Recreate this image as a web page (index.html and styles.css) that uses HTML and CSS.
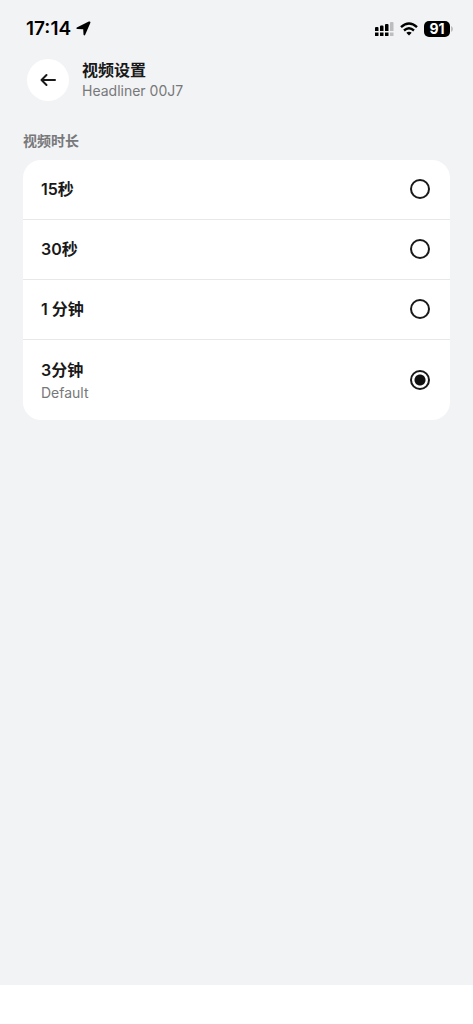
FILE: index.html
```html
<!DOCTYPE html>
<html lang="zh-CN">
<head>
<meta charset="utf-8">
<meta name="viewport" content="width=device-width, initial-scale=1">
<title>视频设置</title>
<link rel="stylesheet" href="styles.css">
</head>
<body>
<div class="screen">
  <div class="status">
    <div class="status-left">
      <span class="clock">17:14</span>
      <svg class="location" viewBox="0 0 15 15" width="15" height="15" aria-hidden="true"><path d="M.8 6.500 12.800.6Q14.900-.1 14.300 2L9.200 13.800Q8.200 15.200 7.500 13.600L7.200 8.200 1.500 8.100Q-.4 7.600.8 6.500Z"/></svg>
    </div>
    <div class="status-right">
      <svg viewBox="0 0 20 16" width="20" height="16" aria-hidden="true">
        <path d="M2 6h1.500q1 0 1 1v3H1V7q0-1 1-1ZM7 4.500h1.500q1 0 1 1V10H6V5.500q0-1 1-1ZM12 3h1.500q1 0 1 1v6H11V4q0-1 1-1Z"/>
        <path d="M1 11.500h3.500v3q0 .5-.5.5H1.500q-.5 0-.5-.5ZM6 11.500h3.500v3q0 .5-.5.5H6.500q-.5 0-.5-.5ZM11 11.500h3.500v3q0 .5-.5.5h-2.500q-.5 0-.5-.5Z"/>
        <path class="faint" d="M17 1h1.500q1 0 1 1v8H16V2q0-1 1-1ZM16 11.500h3.500v3q0 .5-.5.5h-2.500q-.5 0-.5-.5Z"/>
      </svg>
      <svg viewBox="0 0 18 14" width="18" height="14" aria-hidden="true">
        <g class="wifi"><path d="M1 5.100Q9-2.200 17 5.100"/><path d="M4 8.500Q9 4.100 14 8.500"/></g>
        <path d="M6.300 10.800Q9 8.600 11.700 10.800L9 13.500Z"/>
      </svg>
      <div class="battery-wrap"><span class="battery">91</span><svg viewBox="0 0 3 6" width="3" height="6" aria-hidden="true"><path class="faint" d="M0 0Q2 1 2 3T0 6Z"/></svg></div>
    </div>
  </div>
  <header class="header">
    <button class="back" type="button" aria-label="Back">
      <svg viewBox="0 0 18 14" width="18" height="14" aria-hidden="true"><path d="M16 7H2.500M7.500 2 2.500 7l5 5"/></svg>
    </button>
    <div>
      <h1 class="title">视频设置</h1>
      <p class="subtitle">Headliner 00J7</p>
    </div>
  </header>
  <main class="content">
    <h2 class="label" id="duration">视频时长</h2>
    <div class="card" role="radiogroup" aria-labelledby="duration">
      <label class="row"><span class="name">15秒</span><input class="radio" type="radio" name="duration"></label>
      <label class="row"><span class="name">30秒</span><input class="radio" type="radio" name="duration"></label>
      <label class="row"><span class="name">1 分钟</span><input class="radio" type="radio" name="duration"></label>
      <label class="row row-tall"><span class="text"><span class="name">3分钟</span><span class="note">Default</span></span><input class="radio" type="radio" name="duration" checked></label>
    </div>
  </main>
  <div class="bottom"></div>
</div>
</body>
</html>
```
FILE: styles.css
```css
* { box-sizing: border-box; }
body {
  margin: 0;
  background: #f2f3f5;
  color: #191919;
  font-family: Inter, "Noto Sans CJK SC", sans-serif;
}
h1, h2, p { margin: 0; }
.screen {
  display: flex;
  flex-direction: column;
  min-height: 100vh;
}
.status {
  display: flex;
  align-items: center;
  justify-content: space-between;
  height: 57px;
  padding: 0 19px 0 26px;
  color: #000;
}
.status-left { display: flex; align-items: center; gap: 5px; }
.status-right { display: flex; align-items: center; gap: 6px; }
.clock { font-size: 19px; line-height: 24px; font-weight: 600; }
.faint { fill: #bcbdbf; }
.wifi { fill: none; stroke: #000; stroke-width: 2.4; }
.battery-wrap { display: flex; align-items: center; gap: 1px; }
.battery {
  width: 26px;
  border-radius: 5px;
  background: #000;
  color: #fff;
  font-size: 14px;
  line-height: 16px;
  font-weight: 700;
  text-align: center;
}
.header {
  display: flex;
  align-items: center;
  gap: 13px;
  padding: 2px 27px 0;
}
.back {
  display: grid;
  place-items: center;
  width: 42px;
  height: 42px;
  padding: 0;
  border: 0;
  border-radius: 50%;
  background: #fff;
}
.back svg {
  fill: none;
  stroke: #191919;
  stroke-width: 2;
  stroke-linecap: round;
  stroke-linejoin: round;
}
.title { font-size: 16px; line-height: 22px; font-weight: 600; }
.subtitle { font-size: 14px; line-height: 20px; color: #77787a; }
.content { flex: 1; padding: 30px 23px; }
.label {
  margin-bottom: 9px;
  color: #77787a;
  font-size: 14px;
  line-height: 20px;
  font-weight: 600;
}
.card { border-radius: 18px; background: #fff; }
.row {
  display: flex;
  align-items: center;
  justify-content: space-between;
  min-height: 60px;
  padding: 0 20px 1px 18px;
  border-bottom: 1px solid #e6e8ea;
}
.row-tall { min-height: 80px; padding-bottom: 0; border-bottom: 0; }
.text { display: flex; flex-direction: column; gap: 1px; }
.name { font-size: 16px; line-height: 24px; font-weight: 600; }
.note { color: #77787a; font-size: 14px; line-height: 20px; }
.radio {
  appearance: none;
  width: 20px;
  height: 20px;
  margin: 0;
  border: 2px solid #191919;
  border-radius: 50%;
}
.radio:checked { background: radial-gradient(circle, #111 5px, #fff 6px); }
.bottom { height: 39px; background: #fff; }
```
